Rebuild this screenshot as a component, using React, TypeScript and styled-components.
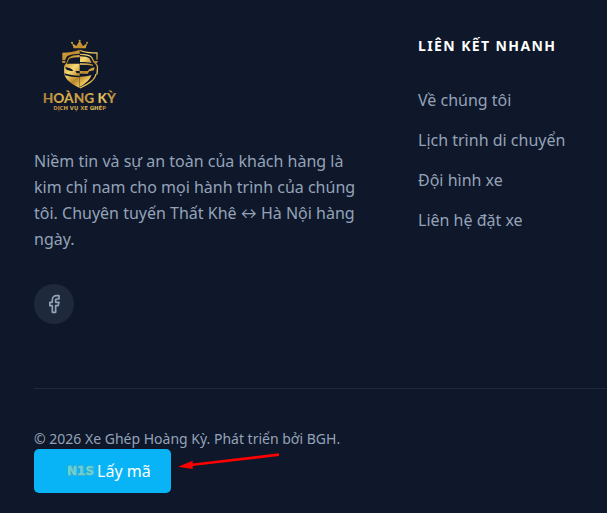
import React from "react";
import styled, { createGlobalStyle } from "styled-components";
import { Facebook } from "lucide-react";

const GlobalStyle = createGlobalStyle`
  *, *::before, *::after { box-sizing: border-box; }
  body {
    margin: 0;
    background: #0f172a;
    color: #94a3b8;
    font: 16px/24px "Noto Sans", sans-serif;
  }
`;

const Footer = styled.footer`
  padding: 32px 0 20px 34px;
  overflow: hidden;
`;

const Columns = styled.div`
  display: grid;
  grid-template-columns: minmax(0, 336px) minmax(0, 1fr);
  column-gap: 48px;
  padding-bottom: 64px;
`;

const Brand = styled.section`
  display: flex;
  flex-direction: column;
  align-items: flex-start;
`;

const LogoLink = styled.a`
  display: block;
  height: 80px;
  margin-bottom: 36px;
`;

const Description = styled.p`
  margin: 0 0 32px;
  line-height: 26px;
`;

const ArrowSign = styled.span`
  font-family: Lato, sans-serif;
`;

const SocialLink = styled.a`
  display: flex;
  align-items: center;
  justify-content: center;
  width: 40px;
  height: 40px;
  border-radius: 50%;
  background: #1e293b;
  color: #94a3b8;
`;

const Heading = styled.h4`
  margin: 4px 0 32px;
  color: #fff;
  font-size: 14px;
  line-height: 20px;
  font-weight: 700;
  letter-spacing: 1.4px;
  text-transform: uppercase;
`;

const LinkList = styled.ul`
  display: flex;
  flex-direction: column;
  gap: 16px;
  margin: 0;
  padding: 0;
  list-style: none;
`;

const FooterLink = styled.a`
  color: inherit;
  text-decoration: none;
`;

const Bottom = styled.div`
  padding-top: 40px;
  border-top: 1px solid #1e293b;
`;

const Copyright = styled.p`
  margin: 0;
  font-size: 14px;
  line-height: 20px;
`;

const CodeRow = styled.div`
  position: relative;
  display: flex;
`;

const CodeButton = styled.button`
  display: flex;
  align-items: center;
  gap: 3px;
  height: 44px;
  padding: 0 20px 0 33px;
  border: 0;
  border-radius: 5px;
  background: #08b4f5;
  color: #fff;
  font: inherit;
`;

const CodeMark = styled.span`
  color: #62d6d8;
  font: 700 12px/20px "DejaVu Sans", sans-serif;
  -webkit-text-stroke: 1px #78a9a2;
  paint-order: stroke fill;
`;

const Arrow = styled.svg`
  position: absolute;
  left: 142px;
  top: 3px;
`;

function Logo() {
  return (
    <svg width="90" height="80" viewBox="12 6 270 240" role="img" aria-label="Hoàng Kỳ - Dịch vụ xe ghép">
      <defs>
        <linearGradient id="gold" gradientUnits="userSpaceOnUse" x1="98" y1="50" x2="200" y2="165">
          <stop offset="0" stopColor="#dcab45" />
          <stop offset=".25" stopColor="#c08a2b" />
          <stop offset=".45" stopColor="#f7da74" />
          <stop offset=".65" stopColor="#b98527" />
          <stop offset=".82" stopColor="#f0cb60" />
          <stop offset="1" stopColor="#b07d25" />
        </linearGradient>
        <linearGradient id="letters" x1="0" x2="1">
          <stop offset="0" stopColor="#a97b35" />
          <stop offset=".3" stopColor="#dfb551" />
          <stop offset=".55" stopColor="#bd9140" />
          <stop offset=".8" stopColor="#e5c45c" />
          <stop offset="1" stopColor="#ad8138" />
        </linearGradient>
      </defs>
      <g fill="url(#gold)">
        <path d="M131 55 126 39l13 9 10-16 10 16 13-9-5 16Z" />
        <circle cx="126" cy="38" r="3" />
        <circle cx="149" cy="32" r="3" />
        <circle cx="171" cy="38" r="3" />
        <path d="M149 59v12c-17 0-30 3-38 8l-6 12h-8V68c20 0 37-3 52-9Z" />
        <path d="M149 75v7c-12 0-22 1-31 4l-8 15h39v73c-24-12-42-23-46-42l-1-13c-1-9 2-15 7-20l6-15c8-7 20-9 34-9Z" />
        <path d="M95 93h12l-2 6h-7ZM191 93h13l-3 6h-8Z" />
        <path d="M150 79c13 0 23 2 28 6l7 14c-10-2-22-3-35-3Z" />
        <path d="M150 123h28l-5 8h-23ZM194 112l-2 8c-5 3-12 4-19 3 4-6 11-10 21-11Z" />
        <path d="M150 140c13 0 25-1 34-5-4 15-17 25-34 35Z" />
      </g>
      <g fill="none" stroke="url(#gold)" strokeWidth="4">
        <path d="M150 61c15 6 31 8 51 8v20" />
        <path d="M150 73c17 0 30 3 35 9l8 15c8 6 11 13 9 22l-1 14" />
        <path d="M198 132c-3 19-24 30-48 42M150 102c14 0 27 0 39 4" />
      </g>
      <g fill="#0f172a">
        <path d="M105 112c12 0 20 4 25 10-11 2-21 0-25-10ZM136 123h13v7h-9ZM104 130c12 5 27 7 45 7v5c-17 0-32-2-44-6Z" />
      </g>
      <text x="148" y="218" textAnchor="middle" fill="url(#letters)" fontFamily="Lato, sans-serif" fontSize="41" fontWeight="900">HOÀNG KỲ</text>
      <text x="149" y="240" textAnchor="middle" fill="url(#letters)" fontFamily="DejaVu Sans, sans-serif" fontSize="16" fontWeight="700">DỊCH VỤ XE GHÉP</text>
    </svg>
  );
}

const links = ["Về chúng tôi", "Lịch trình di chuyển", "Đội hình xe", "Liên hệ đặt xe"];

export default function App() {
  return (
    <>
      <GlobalStyle />
      <Footer>
        <Columns>
          <Brand>
            <LogoLink href="#"><Logo /></LogoLink>
            <Description>
              Niềm tin và sự an toàn của khách hàng là kim chỉ nam cho mọi hành trình của chúng tôi. Chuyên tuyến Thất Khê <ArrowSign>↔</ArrowSign> Hà Nội hàng ngày.
            </Description>
            <SocialLink href="#" aria-label="Facebook"><Facebook size={20} /></SocialLink>
          </Brand>
          <nav aria-labelledby="quick-links">
            <Heading id="quick-links">Liên kết nhanh</Heading>
            <LinkList>
              {links.map((label) => (
                <li key={label}><FooterLink href="#">{label}</FooterLink></li>
              ))}
            </LinkList>
          </nav>
        </Columns>
        <Bottom>
          <Copyright>© 2026 Xe Ghép Hoàng Kỳ. Phát triển bởi BGH.</Copyright>
          <CodeRow>
            <CodeButton type="button"><CodeMark>N1S</CodeMark>Lấy mã</CodeButton>
            <Arrow width="106" height="20" viewBox="0 0 106 20" aria-hidden="true">
              <path d="m2 14.7 14.7-6v2.7L103 1.3v2.8L16.7 14v3Z" fill="#f00" />
            </Arrow>
          </CodeRow>
        </Bottom>
      </Footer>
    </>
  );
}
